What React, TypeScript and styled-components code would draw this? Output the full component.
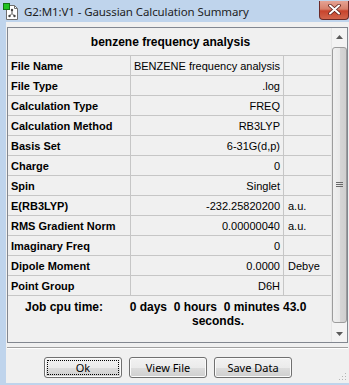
import React from 'react';
import styled, { createGlobalStyle } from 'styled-components';

const GlobalStyle = createGlobalStyle`
  html, body {
    margin: 0;
    padding: 0;
    background: #bfd4ec;
  }
  * {
    box-sizing: border-box;
  }
`;

const Window = styled.div`
  width: 349px;
  height: 385px;
  background: #bfd4ec;
  display: flex;
  flex-direction: column;
  overflow: hidden;
  font-family: 'Liberation Sans', Arial, sans-serif;
`;

const TitleBar = styled.div`
  height: 22px;
  display: flex;
  align-items: center;
  padding-left: 3px;
  flex-shrink: 0;
`;

const TitleText = styled.span`
  margin-left: 4px;
  font-family: 'Noto Sans', 'DejaVu Sans', sans-serif;
  font-size: 11.5px;
  color: #1e1e1e;
  letter-spacing: -0.1px;
`;

const CloseButton = styled.div`
  margin-left: auto;
  width: 30px;
  height: 19px;
  margin-top: -2px;
  border: 1px solid #6b2a28;
  border-top: none;
  border-radius: 0 0 4px 4px;
  background: linear-gradient(#e5a394 0%, #d7806b 45%, #c8432c 55%, #d1654c 100%);
  display: flex;
  align-items: center;
  justify-content: center;
`;

const Client = styled.div`
  flex: 1;
  margin: 0 0 2px 6px;
  background: #f0f0f0;
  padding: 5px 1px 0 1px;
  display: flex;
  flex-direction: column;
  position: relative;
`;

const Panel = styled.div`
  height: 316px;
  border: 1px solid #828790;
  display: flex;
  background: #f0f0f0;
`;

const TableArea = styled.div`
  flex: 1;
  display: flex;
  flex-direction: column;
`;

const HeaderRow = styled.div`
  height: 28px;
  border-bottom: 1px solid #c6c6c6;
  display: flex;
  align-items: center;
  justify-content: center;
  font-weight: bold;
  font-size: 12px;
  color: #000;
  padding-left: 2px;
`;

const Row = styled.div`
  height: 20px;
  display: grid;
  grid-template-columns: 123px 153px 1fr;
  border-bottom: 1px solid #c6c6c6;
`;

const Cell = styled.div<{ $kind: 'label' | 'value' | 'unit' }>`
  display: flex;
  align-items: center;
  font-size: 11px;
  color: #000;
  border-right: ${(p) => (p.$kind === 'unit' ? 'none' : '1px solid #c6c6c6')};
  padding: ${(p) => (p.$kind === 'label' ? '0 0 0 3px' : p.$kind === 'value' ? '0 3px 0 0' : '0 0 0 4px')};
  justify-content: ${(p) => (p.$kind === 'value' ? 'flex-end' : 'flex-start')};
  font-weight: ${(p) => (p.$kind === 'label' ? 'bold' : 'normal')};
  white-space: nowrap;
  overflow: hidden;
`;

const CpuBlock = styled.div`
  display: grid;
  grid-template-columns: 121px auto;
  padding-top: 4px;
  font-weight: bold;
  font-size: 12px;
  color: #000;
  line-height: 14px;
`;

const CpuLabel = styled.div`
  text-align: right;
  padding-right: 26px;
`;

const CpuValue = styled.div`
  text-align: center;
  width: 178px;
`;

const ScrollBar = styled.div`
  width: 16px;
  display: flex;
  flex-direction: column;
  align-items: center;
  background: #f3f3f3;
  border-left: 1px solid #e6e6e6;
`;

const ArrowBox = styled.div`
  height: 17px;
  width: 100%;
  display: flex;
  align-items: center;
  justify-content: center;
`;

const Thumb = styled.div`
  flex: 1;
  width: 15px;
  margin: 2px 0;
  border: 1px solid #9c9c9c;
  border-radius: 3px;
  background: linear-gradient(90deg, #f0f0f0 0%, #e9e9e9 50%, #d6d6d6 51%, #cfcfcf 100%);
  display: flex;
  align-items: center;
  justify-content: center;
`;

const Separator = styled.div`
  margin: 4px 0 0 0;
  height: 2px;
  border-top: 1px solid #a0a0a0;
  border-bottom: 1px solid #ffffff;
`;

const ButtonRow = styled.div`
  display: flex;
  gap: 7px;
  padding: 8px 0 0 37px;
`;

const Button = styled.button<{ $focused?: boolean }>`
  width: 78px;
  height: 21px;
  border: 1px solid #707070;
  border-radius: 3px;
  background: linear-gradient(#f2f2f2 0%, #ebebeb 50%, #dddddd 51%, #cfcfcf 100%);
  font-family: 'Noto Sans', 'DejaVu Sans', sans-serif;
  font-size: 11px;
  color: #000;
  padding: 0;
  position: relative;
  box-shadow: inset 0 0 0 1px #fbfbfb;
  &::after {
    content: '';
    display: ${(p) => (p.$focused ? 'block' : 'none')};
    position: absolute;
    inset: 2px;
    border: 1px dotted #000;
    border-radius: 1px;
  }
`;

const Grip = styled.svg`
  position: absolute;
  right: 2px;
  bottom: 2px;
`;

const rows: { label: string; value: string; unit?: string }[] = [
  { label: 'File Name', value: 'BENZENE frequency analysis' },
  { label: 'File Type', value: '.log' },
  { label: 'Calculation Type', value: 'FREQ' },
  { label: 'Calculation Method', value: 'RB3LYP' },
  { label: 'Basis Set', value: '6-31G(d,p)' },
  { label: 'Charge', value: '0' },
  { label: 'Spin', value: 'Singlet' },
  { label: 'E(RB3LYP)', value: '-232.25820200', unit: 'a.u.' },
  { label: 'RMS Gradient Norm', value: '0.00000040', unit: 'a.u.' },
  { label: 'Imaginary Freq', value: '0' },
  { label: 'Dipole Moment', value: '0.0000', unit: 'Debye' },
  { label: 'Point Group', value: 'D6H' },
];

const AppIcon = () => (
  <svg width="17" height="17" viewBox="0 0 17 17">
    <path d="M3.5 2.5h8l3 3v11h-11z" fill="#fff" stroke="#6e6e6e" />
    <path d="M11.5 2.5v3h3" fill="none" stroke="#6e6e6e" />
    <rect x="0.5" y="0.5" width="6" height="6" fill="#22c322" stroke="#137513" />
    <path d="M9 7v3.5L6.5 13M9 10.5l2.5 2.5" stroke="#555" strokeWidth="1" fill="none" />
    <circle cx="9" cy="7" r="1.2" fill="#444" />
    <circle cx="6.5" cy="13" r="1.2" fill="#444" />
    <circle cx="11.5" cy="13" r="1.2" fill="#444" />
  </svg>
);

export default function App() {
  return (
    <>
      <GlobalStyle />
      <Window>
        <TitleBar>
          <AppIcon />
          <TitleText>G2:M1:V1 - Gaussian Calculation Summary</TitleText>
          <CloseButton>
            <svg width="13" height="11" viewBox="0 0 13 11">
              <path d="M2 1.5l9 8M11 1.5l-9 8" stroke="#5a1f1a" strokeWidth="3.6" strokeLinecap="round" />
              <path d="M2 1.5l9 8M11 1.5l-9 8" stroke="#ffffff" strokeWidth="2" strokeLinecap="round" />
            </svg>
          </CloseButton>
        </TitleBar>
        <Client>
          <Panel>
            <TableArea>
              <HeaderRow>benzene frequency analysis</HeaderRow>
              {rows.map((r) => (
                <Row key={r.label}>
                  <Cell $kind="label">{r.label}</Cell>
                  <Cell $kind="value">{r.value}</Cell>
                  <Cell $kind="unit">{r.unit ?? ''}</Cell>
                </Row>
              ))}
              <CpuBlock>
                <CpuLabel>Job cpu time:</CpuLabel>
                <CpuValue>
                  0 days&nbsp; 0 hours&nbsp; 0 minutes 43.0
                  <br />
                  seconds.
                </CpuValue>
              </CpuBlock>
            </TableArea>
            <ScrollBar>
              <ArrowBox>
                <svg width="7" height="4" viewBox="0 0 7 4">
                  <path d="M3.5 0L7 4H0z" fill="#5a5a5a" />
                </svg>
              </ArrowBox>
              <Thumb>
                <svg width="7" height="6" viewBox="0 0 7 6">
                  <path d="M0 0.5h7M0 2.5h7M0 4.5h7" stroke="#6a6a6a" strokeWidth="1" />
                </svg>
              </Thumb>
              <ArrowBox>
                <svg width="7" height="4" viewBox="0 0 7 4">
                  <path d="M0 0h7L3.5 4z" fill="#5a5a5a" />
                </svg>
              </ArrowBox>
            </ScrollBar>
          </Panel>
          <Separator />
          <ButtonRow>
            <Button $focused>Ok</Button>
            <Button>View File</Button>
            <Button>Save Data</Button>
          </ButtonRow>
          <Grip width="8" height="8" viewBox="0 0 8 8">
            <g fill="#b4b4b4">
              <rect x="6" y="0" width="1" height="1" />
              <rect x="3" y="3" width="1" height="1" />
              <rect x="6" y="3" width="1" height="1" />
              <rect x="0" y="6" width="1" height="1" />
              <rect x="3" y="6" width="1" height="1" />
              <rect x="6" y="6" width="1" height="1" />
            </g>
          </Grip>
        </Client>
      </Window>
    </>
  );
}
